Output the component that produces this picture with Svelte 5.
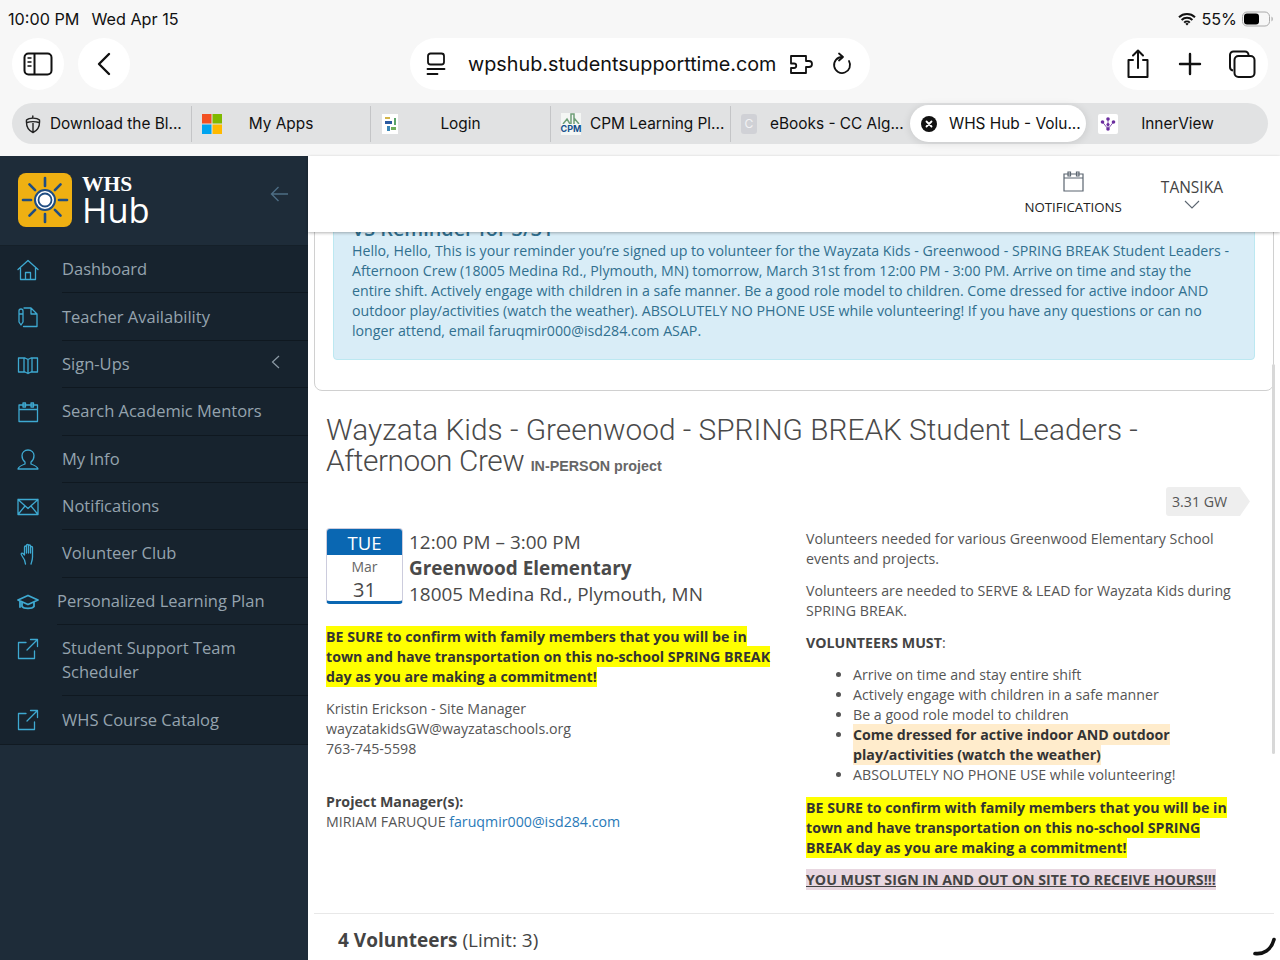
<script>
  const nav = [
    { label: 'Dashboard', icon: 'home' },
    { label: 'Teacher Availability', icon: 'doc' },
    { label: 'Sign-Ups', icon: 'book', caret: true },
    { label: 'Search Academic Mentors', icon: 'cal' },
    { label: 'My Info', icon: 'user' },
    { label: 'Notifications', icon: 'mail' },
    { label: 'Volunteer Club', icon: 'hand' },
    { label: 'Personalized Learning Plan', icon: 'cap', wide: true },
    { label: 'Student Support Team Scheduler', icon: 'ext', tall: true },
    { label: 'WHS Course Catalog', icon: 'ext' }
  ];
  const rays = [0, 45, 90, 135, 180, 225, 270, 315];
  const musts = [
    'Arrive on time and stay entire shift',
    'Actively engage with children in a safe manner',
    'Be a good role model to children'
  ];
</script>

<div class="page">
  <header class="chrome">
    <div class="status">
      <div class="clock"><span>10:00 PM</span><span>Wed Apr 15</span></div>
      <div class="sys">
        <svg width="18" height="14" viewBox="0 0 18 14"><path d="M1 5.200a11.600 11.600 0 0 1 16 0M3.600 8a7.800 7.800 0 0 1 10.800 0M6.200 10.600a4 4 0 0 1 5.600 0" fill="none" stroke="#111" stroke-width="2"/><path d="M9 13.600l-1.700-1.800a2.400 2.400 0 0 1 3.400 0z" fill="#111"/></svg>
        <span>55%</span>
        <svg width="32" height="16" viewBox="0 0 32 16"><rect x=".5" y="1" width="27" height="14" rx="4.500" fill="none" stroke="#aaa"/><rect x="2" y="2.500" width="15" height="11" rx="3" fill="#000"/><path d="M29.500 5.500a3 3 0 0 1 0 5z" fill="#aaa"/></svg>
      </div>
    </div>

    <div class="toolbar">
      <button class="round" aria-label="Sidebar">
        <svg width="30" height="24" viewBox="0 0 30 24" fill="none" stroke="#111" stroke-width="2"><rect x="1.500" y="1.500" width="27" height="21" rx="4"/><path d="M11.500 1.500v21"/><path d="M4.500 6h4M4.500 10h4M4.500 14h4" stroke-width="1.600"/></svg>
      </button>
      <button class="round" aria-label="Back">
        <svg width="14" height="24" viewBox="0 0 14 24" fill="none" stroke="#111" stroke-width="2.400" stroke-linecap="round" stroke-linejoin="round"><path d="M12 2L2 12l10 10"/></svg>
      </button>
      <div class="address">
        <svg width="20" height="24" viewBox="0 0 20 24" fill="none" stroke="#111" stroke-width="1.800" stroke-linecap="round"><rect x="2" y="1.500" width="16" height="11" rx="2.500"/><path d="M1.500 17h17M1.500 22h10"/></svg>
        <span class="url">wpshub.studentsupporttime.com</span>
        <svg class="puzzle" width="26" height="22" viewBox="0 0 26 22" fill="none" stroke="#111" stroke-width="1.800" stroke-linejoin="round"><path d="M2 3h15v5h3a3 3 0 0 1 0 6h-3v6H2v-5h3a2.200 2.200 0 0 0 0-4.500H2z"/></svg>
        <svg class="reload" width="20" height="24" viewBox="0 0 20 24" fill="none" stroke="#111" stroke-width="1.800" stroke-linecap="round" stroke-linejoin="round"><path d="M10 5A8 8 0 1 0 17 9"/><path d="M7 1.500l4 3.500-4 3.500"/></svg>
      </div>
      <div class="actions">
        <svg width="26" height="30" viewBox="0 0 26 30" fill="none" stroke="#111" stroke-width="2" stroke-linecap="round" stroke-linejoin="round"><path d="M13 19V2M8 6.500L13 1.500l5 5"/><path d="M8 11H3.500v17h19V11H18"/></svg>
        <svg width="24" height="24" viewBox="0 0 24 24" stroke="#111" stroke-width="2.400" stroke-linecap="round"><path d="M12 2v20M2 12h20"/></svg>
        <svg width="28" height="28" viewBox="0 0 28 28" fill="none" stroke="#111" stroke-width="2"><path d="M5 20.500a3.500 3.500 0 0 1-3-3.500V5a3.500 3.500 0 0 1 3.500-3.500H17A3.500 3.500 0 0 1 20.500 5"/><rect x="6.500" y="6" width="20" height="21" rx="4"/></svg>
      </div>
    </div>

    <div class="tabs">
      <div class="tab long first">
        <svg width="16" height="20" viewBox="0 0 16 20" fill="none" stroke="#222" stroke-width="1.400" stroke-linejoin="round"><path d="M8 1.500L7.500 4"/><path d="M1.500 6C4 3.500 12 3.500 14.500 6c.5 6-1.500 10.500-6.500 12.500C3 16.500 1 12 1.500 6zM2 8.500c3-1 9-1 12 0M8 9v9"/></svg>
        <span>Download the Bl...</span>
      </div>
      <div class="tab">
        <svg class="ico" width="20" height="20" viewBox="0 0 20 20"><rect width="9.500" height="9.500" fill="#f25022"/><rect x="10.500" width="9.500" height="9.500" fill="#7fba00"/><rect y="10.500" width="9.500" height="9.500" fill="#00a4ef"/><rect x="10.500" y="10.500" width="9.500" height="9.500" fill="#ffb900"/></svg>
        <span>My Apps</span>
      </div>
      <div class="tab">
        <svg class="ico login" width="16" height="20" viewBox="0 0 16 20"><rect width="16" height="20" fill="#fff"/><rect x="3" y="3" width="5" height="2" fill="#d3b54a"/><rect x="3" y="7" width="7" height="3" fill="#2c5aa0"/><rect x="12" y="4" width="2" height="7" fill="#5aa469"/><rect x="5" y="12" width="3" height="5" fill="#3a86b7"/><rect x="9" y="13" width="5" height="3" fill="#6fae5a"/></svg>
        <span>Login</span>
      </div>
      <div class="tab long">
        <span class="cpm"><svg width="20" height="11" viewBox="0 0 20 11" fill="none"><path d="M2 11l4-5 3 5M10 11V1h3v10M13 5l5 6" stroke="#6f9f78" stroke-width="1.500"/></svg><b>CPM</b></span>
        <span>CPM Learning Pl...</span>
      </div>
      <div class="tab long">
        <span class="cicon">C</span>
        <span>eBooks - CC Alg...</span>
      </div>
      <div class="tab long active">
        <svg width="16" height="16" viewBox="0 0 16 16"><circle cx="8" cy="8" r="8" fill="#111"/><path d="M5.500 5.500l5 5m0-5l-5 5" stroke="#fff" stroke-width="1.800" stroke-linecap="round"/></svg>
        <span>WHS Hub - Volu...</span>
      </div>
      <div class="tab last">
        <svg class="ico" width="20" height="20" viewBox="0 0 20 20"><rect width="20" height="20" rx="2" fill="#fff"/><g fill="#6b2d9e"><circle cx="10" cy="5" r="1.800"/><circle cx="4.500" cy="8" r="1.800"/><circle cx="15.500" cy="8" r="1.800"/><circle cx="10" cy="10.500" r="1.600"/><circle cx="10" cy="15" r="1.800"/></g><path d="M4.500 8L10 15l5.500-7M10 5v10" stroke="#6b2d9e" stroke-width=".8" fill="none"/></svg>
        <span>InnerView</span>
      </div>
    </div>
  </header>

  <div class="body">
    <aside class="side">
      <div class="brand">
        <svg class="logo" width="54" height="54" viewBox="0 0 54 54">
          <rect width="54" height="54" rx="8" fill="#efb012"/>
          {#each rays as r}
            <path d="M27 5v8" transform="rotate({r} 27 27)" stroke="#1f4d83" stroke-width="2.600" stroke-linecap="round"/>
          {/each}
          <circle cx="27" cy="27" r="10" fill="#fff" stroke="#1f4d83" stroke-width="2"/>
          <circle cx="27" cy="27" r="6.500" fill="#fff" stroke="#1f4d83" stroke-width="1.800"/>
        </svg>
        <div class="wordmark"><span class="whs">WHS</span><span class="hub">Hub</span></div>
        <svg class="collapse" width="18" height="16" viewBox="0 0 18 16" fill="none" stroke="#4d6d84" stroke-width="1.400"><path d="M18 8H1.500M8.500 1L1.500 8l7 7"/></svg>
      </div>
      <nav>
        {#each nav as item}
          <div class="row" class:wide={item.wide}>
            <span class="ic">
              <svg width="22" height="22" viewBox="0 0 22 22" fill="none" stroke="#3ea9d1" stroke-width="1.300" stroke-linejoin="round" stroke-linecap="round">
                {#if item.icon === 'home'}
                  <path d="M1 10.500L11 1.500l10 9M3.500 9v11.500h15V9M8.500 20.500v-7h5v7"/>
                {:else if item.icon === 'doc'}
                  <path d="M7 2h7l6 6v12.500H6.500M14 2v6h6"/><path d="M2 5a2 2 0 0 1 4 0v11l-2 3-2-3zM2 8h4"/>
                {:else if item.icon === 'book'}
                  <path d="M1.500 4h6.500l3 1.500L14 4h6.500v14H14l-3 1.500L8 18H1.500zM7 4v14M11 5.500v14M15 4v14"/>
                {:else if item.icon === 'cal'}
                  <path d="M2 4h18.500v16.500H2zM2 8.500h18.500"/><path d="M6 2v4h2.500V2zM14 2v4h2.500V2z"/>
                {:else if item.icon === 'user'}
                  <path d="M8 13c-2-1.500-3-4-3-6.500C5 3.500 7.500 1 11 1s6 2.500 6 5.500c0 2.500-1 5-3 6.500v2c3 1 6 2 7 5H1c1-3 4-4 7-5z"/>
                {:else if item.icon === 'mail'}
                  <path d="M1 3.500h20v15H1zM1 3.500l10 9 10-9M1 18.500l7-8.500M21 18.500l-7-8.500"/>
                {:else if item.icon === 'hand'}
                  <path d="M7.500 12V4a1 1 0 0 1 2 0V2.500a1 1 0 0 1 2 0V3a1 1 0 0 1 2 0v1.500a1 1 0 0 1 2 0V14c0 3-1 5-1.500 7M9.500 4v6M11.500 3v7M13.500 3v7M7.500 12L6 10.500c-1-1-2.500 0-1.500 1.500l3 5 1 4"/>
                {:else if item.icon === 'cap'}
                  <path d="M11 4.500L1 9l10 4.500L21 9zM5 11v4.500c2 2.500 10 2.500 12 0V11M3 10v6" stroke-width="1.800"/>
                {:else}
                  <path d="M9 4.500H1.500v16h16V13M10 12L20.500 1.500M13.500 1.500h7v7"/>
                {/if}
              </svg>
            </span>
            <div class="label" class:tall={item.tall}>
              <span>{item.label}</span>
              {#if item.caret}
                <svg class="caret" width="9" height="14" viewBox="0 0 9 14" fill="none" stroke="#8c9aa5" stroke-width="1.200"><path d="M8 1L1.500 7 8 13"/></svg>
              {/if}
            </div>
          </div>
        {/each}
      </nav>
    </aside>

    <main>
      <div class="topbar">
        <div class="notif">
          <svg width="21" height="21" viewBox="0 0 21 21" fill="none" stroke="#5b6570" stroke-width="1.200"><path d="M1 3h19v17H1zM1 7h19"/><path d="M5 1v4h2.500V1zM13.500 1v4H16V1z"/></svg>
          <span>NOTIFICATIONS</span>
        </div>
        <div class="person">
          <span>TANSIKA</span>
          <svg width="16" height="9" viewBox="0 0 16 9" fill="none" stroke="#5b6570" stroke-width="1.100"><path d="M1 1l7 7 7-7"/></svg>
        </div>
      </div>

      <div class="content">
        <section class="panel">
          <div class="alert">
            <h4>VS Reminder for 3/31</h4>
            <p>Hello, Hello, This is your reminder you’re signed up to volunteer for the Wayzata Kids - Greenwood - SPRING BREAK Student Leaders - Afternoon Crew (18005 Medina Rd., Plymouth, MN) tomorrow, March 31st from 12:00 PM - 3:00 PM. Arrive on time and stay the entire shift. Actively engage with children in a safe manner. Be a good role model to children. Come dressed for active indoor AND outdoor play/activities (watch the weather). ABSOLUTELY NO PHONE USE while volunteering! If you have any questions or can no longer attend, email faruqmir000@isd284.com ASAP.</p>
          </div>
        </section>

        <div class="detail">
          <h1>Wayzata Kids - Greenwood - SPRING BREAK Student Leaders - <span class="tight">Afternoon Crew</span> <small>IN-PERSON project</small></h1>
          <div class="tagrow"><span class="tag">3.31 GW</span></div>

          <div class="cols">
            <div class="left">
              <div class="when">
                <div class="date">
                  <div class="dow">TUE</div>
                  <div class="mon">Mar</div>
                  <div class="day">31</div>
                </div>
                <div class="where">
                  <div>12:00 PM – 3:00 PM</div>
                  <div class="place">Greenwood Elementary</div>
                  <div>18005 Medina Rd., Plymouth, MN</div>
                </div>
              </div>
              <p class="warn"><mark>BE SURE to confirm with family members that you will be in town and have transportation on this no-school SPRING BREAK day as you are making a commitment!</mark></p>
              <p>Kristin Erickson - Site Manager<br>wayzatakidsGW@wayzataschools.org<br>763-745-5598</p>
              <p class="pm"><b>Project Manager(s):</b><br>MIRIAM FARUQUE <a href="#top">faruqmir000@isd284.com</a></p>
            </div>
            <div class="right">
              <p>Volunteers needed for various Greenwood Elementary School events and projects.</p>
              <p>Volunteers are needed to SERVE &amp; LEAD for Wayzata Kids during SPRING BREAK.</p>
              <p><b>VOLUNTEERS MUST</b>:</p>
              <ul>
                {#each musts as m}<li>{m}</li>{/each}
                <li><b class="peach">Come dressed for active indoor AND outdoor play/activities (watch the weather)</b></li>
                <li>ABSOLUTELY NO PHONE USE while volunteering!</li>
              </ul>
              <p class="warn"><mark>BE SURE to confirm with family members that you will be in town and have transportation on this no-school SPRING BREAK day as you are making a commitment!</mark></p>
              <p><b class="hours">YOU MUST SIGN IN AND OUT ON SITE TO RECEIVE HOURS!!!</b></p>
            </div>
          </div>
        </div>

        <div class="vols"><b>4 Volunteers</b> (Limit: 3)</div>

        <div class="scrollbar"></div>
        <svg class="spinner" width="24" height="22" viewBox="0 0 24 22" fill="none" stroke="#111" stroke-width="3.600" stroke-linecap="round"><path d="M2 18.500c8 1 16-3 19-14"/></svg>
      </div>
    </main>
  </div>
</div>

<style>
  :global(body) {
    margin: 0;
    background: #fff;
  }
  .page {
    width: 1280px;
    height: 960px;
    overflow: hidden;
    display: flex;
    flex-direction: column;
    font-family: "Open Sans", sans-serif;
    color: #555;
  }
  .chrome {
    height: 156px;
    flex: none;
    box-sizing: border-box;
    background: #f7f7f7;
    font-family: Inter, sans-serif;
    color: #111;
  }
  .status {
    height: 38px;
    display: flex;
    justify-content: space-between;
    align-items: center;
    padding: 0 6px 0 8px;
    font-size: 16.200px;
  }
  .clock {
    display: flex;
    gap: 12px;
  }
  .sys {
    display: flex;
    align-items: center;
    gap: 5px;
  }
  .toolbar {
    height: 52px;
    display: flex;
    align-items: center;
    padding: 0 12px;
  }
  .round {
    width: 52px;
    height: 52px;
    border: 0;
    padding: 0;
    border-radius: 50%;
    background: #fff;
    display: flex;
    align-items: center;
    justify-content: center;
    margin-right: 14px;
  }
  .address {
    margin-left: 266px;
    width: 460px;
    height: 52px;
    box-sizing: border-box;
    border-radius: 26px;
    background: #fff;
    display: flex;
    align-items: center;
    padding-left: 16px;
  }
  .url {
    margin-left: 22px;
    font-size: 19.800px;
    white-space: nowrap;
    width: 321px;
  }
  .reload {
    margin-left: 17px;
  }
  .actions {
    margin-left: auto;
    width: 156px;
    height: 52px;
    box-sizing: border-box;
    border-radius: 26px;
    background: #fff;
    display: flex;
    align-items: center;
    justify-content: space-between;
    padding: 0 12px 0 13px;
  }
  .tabs {
    margin: 13px 12px 0;
    height: 41px;
    border-radius: 21px;
    background: #e1e2e3;
    display: grid;
    grid-template-columns: 180px 179px 180px 180px 179px 176px 1fr;
    align-items: center;
    font-size: 15.400px;
  }
  .tab {
    height: 36px;
    display: grid;
    align-items: center;
    border-right: 1px solid #c4c5c7;
    box-sizing: border-box;
    white-space: nowrap;
    padding-left: 10px;
  }
  .tab > * {
    grid-row: 1;
    grid-column: 1;
  }
  .tab > span:last-child {
    justify-self: center;
    padding-right: 10px;
  }
  .tab .ico {
    justify-self: start;
  }
  .tab .login {
    margin-left: 1px;
  }
  .tab.long {
    grid-template-columns: 20px 1fr;
    column-gap: 9px;
  }
  .tab.long > span:last-child {
    grid-column: 2;
    justify-self: start;
    padding-right: 0;
  }
  .tab.first {
    padding-left: 13px;
    column-gap: 0;
    grid-template-columns: 25px 1fr;
  }
  .tab:nth-child(5),
  .tab.active,
  .tab.last {
    border-right: 0;
  }
  .tab.active {
    height: 37px;
    background: #fff;
    border-radius: 19px;
    box-shadow: 0 1px 8px rgba(0, 0, 0, .12);
    padding-left: 11px;
    column-gap: 12px;
    grid-template-columns: 16px 1fr;
  }
  .tab.last {
    padding-left: 12px;
  }
  .tab.last > span:last-child {
    padding-right: 11px;
  }
  .cpm {
    width: 20px;
    height: 22px;
    background: #f4f6f4;
    display: flex;
    flex-direction: column;
    align-items: center;
    line-height: 10px;
    font-size: 9px;
    color: #14508c;
  }
  .cpm svg {
    flex: none;
  }
  .cicon {
    width: 16px;
    height: 20px;
    border-radius: 3px;
    background: #d0d1d6;
    color: #f2f2f4;
    font-size: 12px;
    line-height: 20px;
    text-align: center;
  }
  .body {
    flex: 1;
    min-height: 0;
    display: flex;
  }
  .side {
    width: 308px;
    flex: none;
    background: #1e2c39;
  }
  .brand {
    height: 90px;
    box-sizing: border-box;
    padding: 17px 20px 0 18px;
    display: flex;
    align-items: flex-start;
    border-bottom: 1px solid #152029;
  }
  .logo {
    flex: none;
  }
  .wordmark {
    margin-left: 11px;
    display: flex;
    flex-direction: column;
    color: #fff;
    margin-top: 1px;
  }
  .whs {
    font-family: "Liberation Serif", serif;
    font-weight: 700;
    font-size: 21.500px;
    line-height: 20px;
    margin-left: -1px;
  }
  .hub {
    font-size: 34.500px;
    font-weight: 500;
    line-height: 32px;
    margin-left: -1px;
  }
  .collapse {
    margin-left: auto;
    margin-top: 13px;
  }
  nav {
    background: #17232e;
    border-bottom: 1px solid #111a22;
  }
  .row {
    display: flex;
    color: #95a3ae;
    font-size: 16.500px;
    line-height: 24px;
  }
  .ic {
    width: 62px;
    flex: none;
    box-sizing: border-box;
    padding: 13px 0 0 17px;
    display: block;
  }
  .row.wide .ic {
    width: 57px;
  }
  .label {
    flex: 1;
    display: flex;
    justify-content: space-between;
    align-items: center;
    padding: 11.200px 28px 11.200px 0;
    border-bottom: 1px solid #0f1820;
  }
  .caret {
    margin-top: -4px;
  }
  .row:last-child .label {
    border-bottom: 0;
    padding-bottom: 12px;
  }
  .label.tall span {
    max-width: 200px;
  }
  main {
    flex: 1;
    min-width: 0;
    display: flex;
    flex-direction: column;
  }
  .topbar {
    height: 76px;
    flex: none;
    background: #fff;
    box-shadow: 0 1px 3px rgba(0, 0, 0, .3);
    position: relative;
    z-index: 2;
    display: flex;
    justify-content: flex-end;
    padding-right: 57px;
    gap: 39px;
  }
  .notif {
    display: flex;
    flex-direction: column;
    align-items: center;
    padding-top: 15px;
    gap: 6px;
    font-size: 13.300px;
    line-height: 18px;
    color: #222;
  }
  .person {
    display: flex;
    flex-direction: column;
    align-items: center;
    padding-top: 21px;
    gap: 2px;
    font-size: 15.500px;
    line-height: 21px;
    color: #444;
  }
  .content {
    flex: 1;
    min-height: 0;
    overflow: hidden;
    position: relative;
    font-size: 14.200px;
    line-height: 20px;
    color: #555;
  }
  .panel {
    margin: -40px 6px 0;
    height: 199px;
    box-sizing: border-box;
    border: 1px solid #d0d0d0;
    border-radius: 0 0 8px 8px;
    padding: 0 18px;
  }
  .alert {
    height: 167px;
    box-sizing: border-box;
    background: #d9edf7;
    border: 1px solid #bce8f1;
    border-radius: 4px;
    padding: 23px 18px 0;
    color: #31708f;
  }
  .alert h4 {
    margin: 0;
    font-size: 19.800px;
    line-height: 24px;
    font-weight: 600;
  }
  .alert p {
    margin: 0;
    width: 880px;
  }
  .detail {
    padding: 23px 30px 0 18px;
  }
  h1 {
    margin: 0;
    font-family: Roboto, sans-serif;
    font-weight: 300;
    font-size: 29.800px;
    line-height: 31px;
    color: #4a4a4a;
    width: 900px;
  }
  .tight {
    letter-spacing: -.4px;
  }
  h1 small {
    font-family: "Liberation Sans", sans-serif;
    font-size: 14.300px;
    font-weight: 700;
    color: #666;
    margin-left: -1px;
  }
  .tagrow {
    display: flex;
    justify-content: flex-end;
    margin-top: 5px;
  }
  .tag {
    height: 29px;
    width: 84px;
    box-sizing: border-box;
    padding-left: 6px;
    line-height: 29px;
    background: #eee;
    clip-path: polygon(0 0, 88% 0, 100% 50%, 88% 100%, 0 100%);
    border-radius: 3px;
    color: #555;
  }
  .cols {
    display: grid;
    grid-template-columns: 450px 440px;
    column-gap: 30px;
    margin-top: 12px;
  }
  .when {
    display: flex;
    gap: 6px;
    margin-bottom: 20px;
    font-size: 18.950px;
    line-height: 26px;
    color: #4a4a4a;
  }
  .where {
    padding-top: 1px;
  }
  .date {
    width: 77px;
    height: 76px;
    box-sizing: border-box;
    border: 1px solid #ccd;
    border-bottom: 3px solid #0a67b2;
    border-radius: 4px;
    text-align: center;
    overflow: hidden;
  }
  .dow {
    background: #0a67b2;
    color: #fff;
    height: 26px;
    line-height: 27px;
    font-size: 18.500px;
  }
  .mon {
    font-size: 14px;
    line-height: 22px;
    margin-top: 1px;
    color: #666;
  }
  .day {
    font-size: 20px;
    line-height: 24px;
  }
  .place {
    font-weight: 700;
  }
  .right {
    padding-top: 1px;
  }
  p {
    margin: 0 0 12px;
  }
  .warn mark {
    background: #ff0;
    color: #333;
    font-weight: 700;
    padding: 1px 0;
  }
  .pm {
    margin-top: 33px;
  }
  .pm a {
    color: #2a7ab8;
    text-decoration: none;
  }
  b {
    font-weight: 700;
  }
  .left b,
  .right p > b {
    color: #444;
  }
  ul {
    margin: 0 0 13px;
    padding: 0 0 0 47px;
  }
  .peach {
    background: #ffeccc;
    color: #333;
    padding: 1px 0;
  }
  .hours {
    background: #e8d7e0;
    text-decoration: underline;
    padding: 1px 0;
  }
  .vols {
    margin: 11px 6px 0;
    padding: 13px 24px 0;
    border-top: 1px solid #e8e8e8;
    font-size: 19px;
    line-height: 26px;
    color: #444;
  }
  .scrollbar {
    position: absolute;
    left: 964px;
    top: 132px;
    width: 3px;
    height: 390px;
    border-radius: 2px;
    background: #d8d8d8;
  }
  .spinner {
    position: absolute;
    right: 3px;
    bottom: 3px;
  }
</style>
